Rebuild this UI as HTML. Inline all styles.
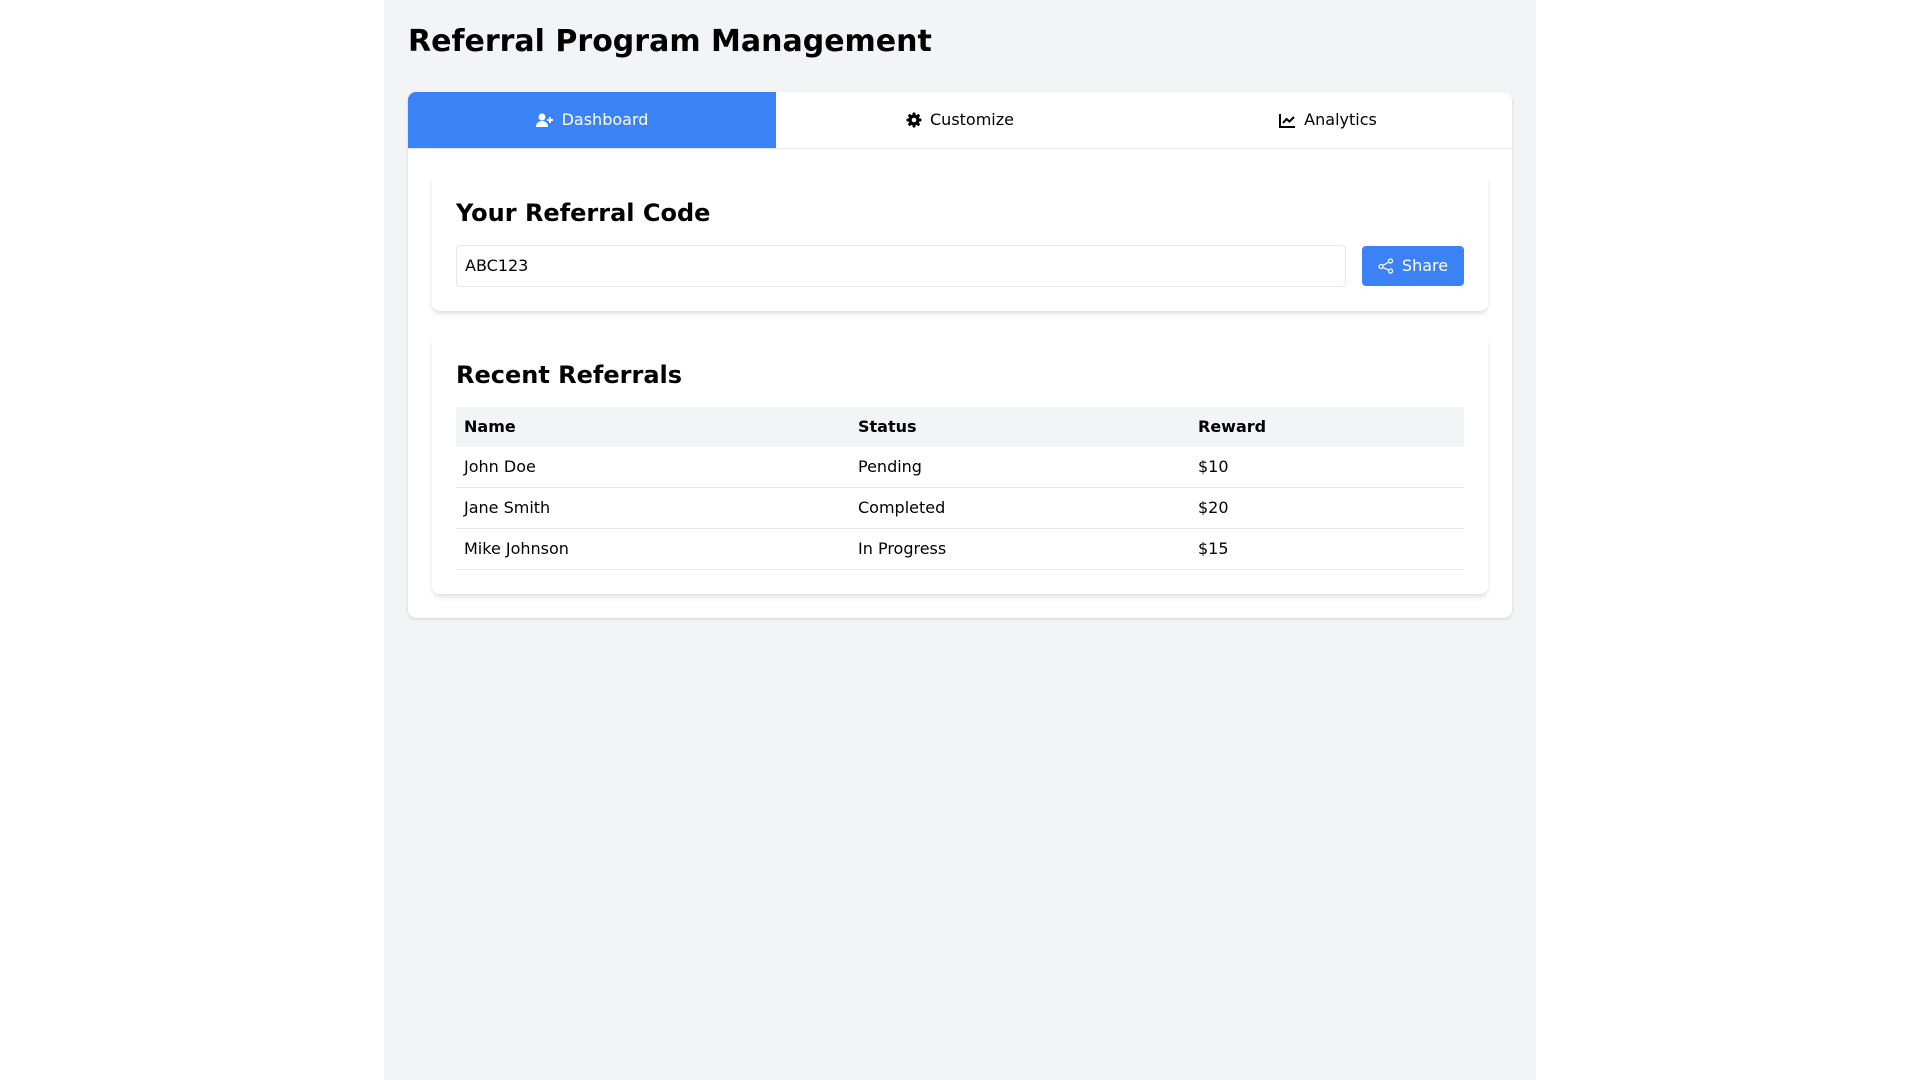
<!DOCTYPE html>
<html><head><meta charset="utf-8"><style>
*{box-sizing:border-box;margin:0;padding:0}
body{width:1920px;height:1080px;background:#fff;font-family:"DejaVu Sans","Liberation Sans",sans-serif;color:#000;font-size:16px;line-height:24px}
.wrap{position:absolute;left:384px;top:0;width:1152px;height:1080px;background:#f3f4f6;padding:24px}
h1{font-size:30px;line-height:36px;font-weight:700;margin-bottom:32px}
.panel{background:#fff;border-radius:8px;box-shadow:0 1px 3px rgba(0,0,0,.1),0 1px 2px rgba(0,0,0,.06);overflow:hidden}
.tabs{display:flex;border-bottom:1px solid #e5e7eb;height:57px}
.tab{flex:1;display:flex;align-items:center;justify-content:center;gap:8px;height:56px}
.tab.active{background:#3b82f6;color:#fff}
.content{padding:24px}
.card{background:#fff;border-radius:8px;box-shadow:0 4px 6px -1px rgba(0,0,0,.1),0 2px 4px -1px rgba(0,0,0,.06);padding:24px;margin-bottom:24px}
.card:last-child{margin-bottom:0}
h2{font-size:24px;line-height:32px;font-weight:700;margin-bottom:16px}
.row{display:flex;gap:16px;align-items:center}
.input{flex:1;height:42px;border:1px solid #e5e7eb;border-radius:4px;padding:8px;line-height:24px}
.btn{width:102px;height:40px;background:#3b82f6;color:#fff;border-radius:4px;display:flex;align-items:center;justify-content:center;gap:8px}
table{width:100%;border-collapse:collapse}
th{background:#f3f4f6;text-align:left;font-weight:700;padding:8px;height:40px}
td{padding:8px;border-bottom:1px solid #e5e7eb;height:40px}
</style></head><body>
<div class="wrap">
<h1>Referral Program Management</h1>
<div class="panel">
<div class="tabs">
<div class="tab active"><svg width="18" height="15" viewBox="0 0 18 15"><circle cx="6" cy="4" r="3.5" fill="#fff"/><path d="M0 14c0-4 2.5-6 6-6s6 2 6 6z" fill="#fff"/><path d="M14 4v6M11 7h6" stroke="#fff" stroke-width="2"/></svg>Dashboard</div>
<div class="tab"><svg width="16" height="16" viewBox="0 0 16 16"><g fill="#000"><circle cx="8" cy="8" r="5.5"/><rect x="6.5" y="0.5" width="3" height="15" rx="1"/><rect x="0.5" y="6.5" width="15" height="3" rx="1"/><rect x="6.5" y="0.5" width="3" height="15" rx="1" transform="rotate(45 8 8)"/><rect x="6.5" y="0.5" width="3" height="15" rx="1" transform="rotate(-45 8 8)"/></g><circle cx="8" cy="8" r="2.3" fill="#fff"/></svg>Customize</div>
<div class="tab"><svg width="17" height="15" viewBox="0 0 17 15"><path d="M1 1v13h15" stroke="#000" stroke-width="2" fill="none"/><path d="M4 10l3.5-4 3 2.5L15 4" stroke="#000" stroke-width="2" fill="none"/></svg>Analytics</div>
</div>
<div class="content">
<div class="card">
<h2>Your Referral Code</h2>
<div class="row"><div class="input">ABC123</div><div class="btn"><svg width="16" height="16" viewBox="0 0 16 16" fill="none" stroke="#fff" stroke-width="1.2"><circle cx="12.5" cy="3" r="2"/><circle cx="3" cy="8.5" r="2"/><circle cx="12.5" cy="13" r="2"/><path d="M4.8 7.5l6-3.4M4.8 9.5l6 2.6"/></svg>Share</div></div>
</div>
<div class="card">
<h2>Recent Referrals</h2>
<table>
<tr><th style="width:394px">Name</th><th style="width:340px">Status</th><th>Reward</th></tr>
<tr><td>John Doe</td><td>Pending</td><td>$10</td></tr>
<tr><td>Jane Smith</td><td>Completed</td><td>$20</td></tr>
<tr><td>Mike Johnson</td><td>In Progress</td><td>$15</td></tr>
</table>
</div>
</div>
</div>
</div>
</body></html>
